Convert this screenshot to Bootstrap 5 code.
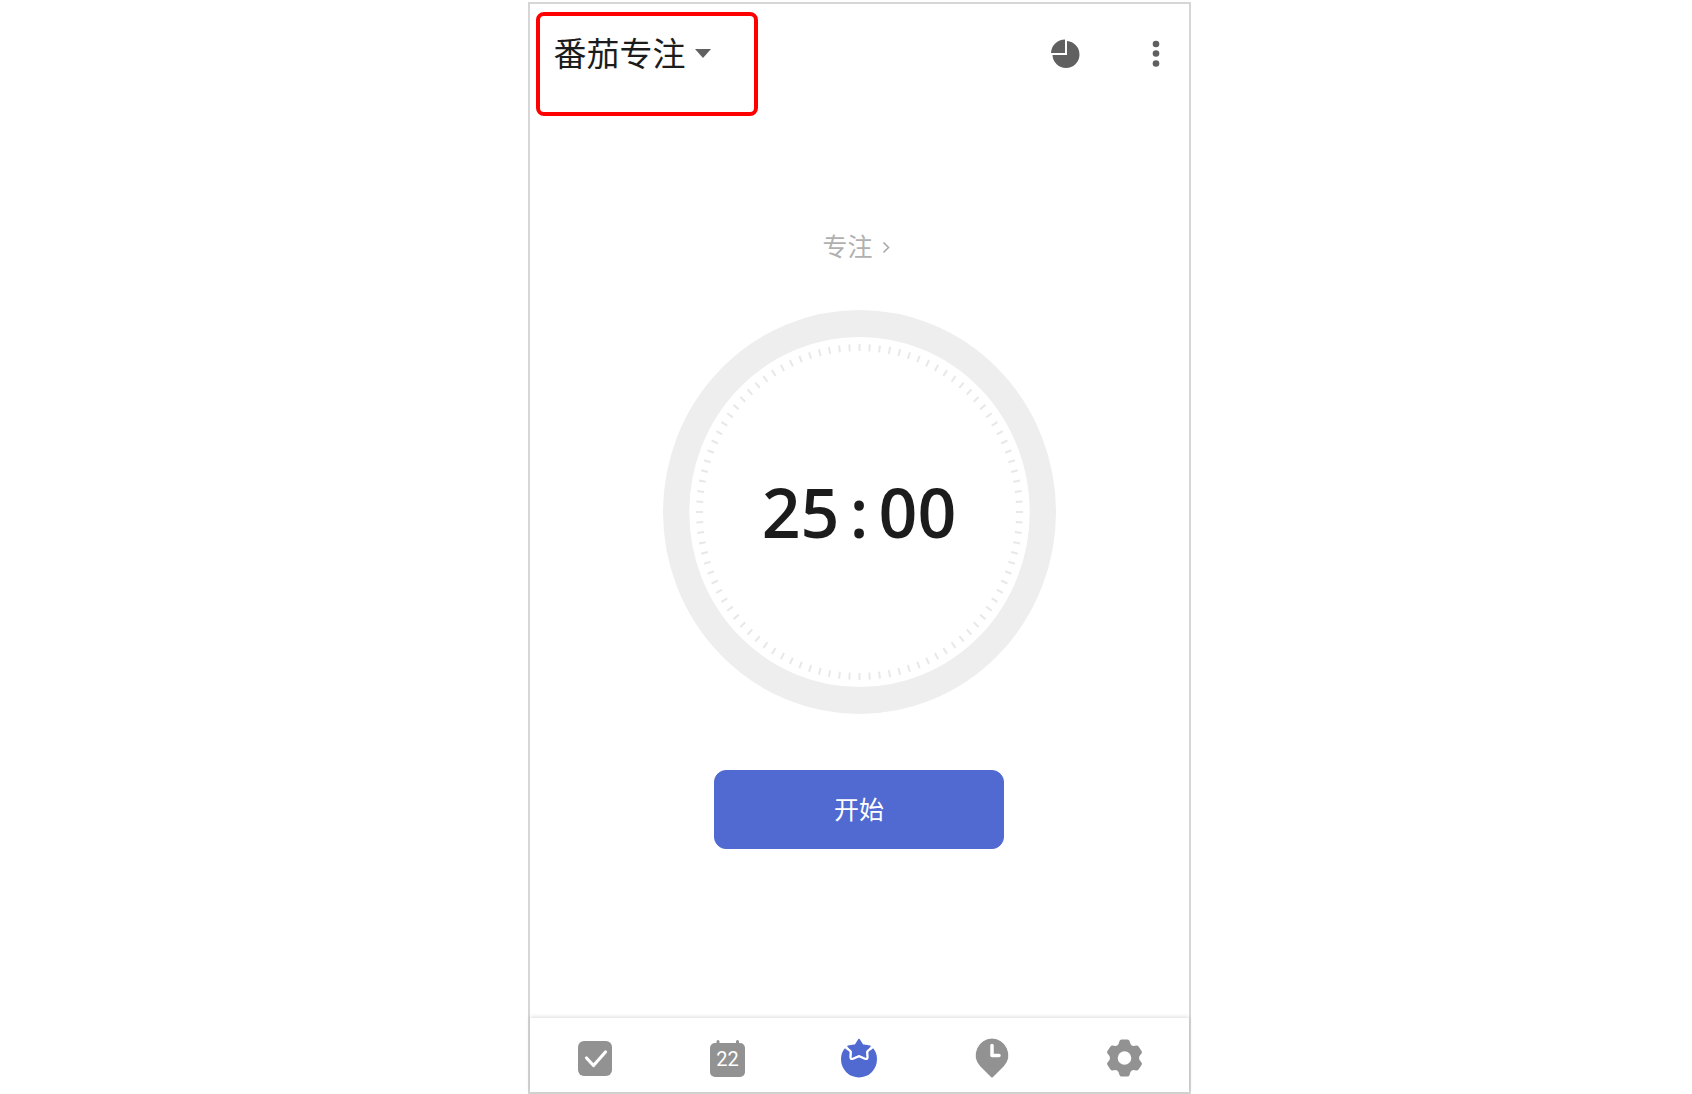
<!DOCTYPE html>
<html lang="zh-CN">
<head>
<meta charset="utf-8">
<meta name="viewport" content="width=device-width, initial-scale=1">
<title>番茄专注</title>
<link href="https://cdn.jsdelivr.net/npm/bootstrap@5.3.0/dist/css/bootstrap.min.css" rel="stylesheet">
<style>
  body { font-family: Roboto, "Noto Sans CJK SC", sans-serif; background: #fff; }
  .stage { min-height: 100vh; padding: 2px 0 0 26px; }
  .phone { width: 100%; max-width: 663px; border: 2px solid #d6d6d6; }
  .topbar { padding: 8px 9px 0 6px; }
  .highlight { width: 222px; height: 104px; padding: 19px 14px; border: 4px solid #f00; border-radius: 8px; }
  .title-btn { font-size: 33px; line-height: 40px; color: #1c1c1c; gap: 9px; }
  .actions { padding-top: 18px; gap: 42px; }
  .icon-btn { width: 48px; height: 48px; }
  .mode-btn { margin-top: 117px; padding: 0 6px 0 0; font-size: 25px; line-height: 30px; color: #b0b0b0; gap: 9px; }
  .dial { margin-top: 47px; }
  .dial svg { width: 393px; height: 404px; }
  .clock { font: 600 68px/80px "Open Sans", "Noto Sans", sans-serif; color: #1c1c1c; }
  .clock-colon { width: 39px; }
  .start-btn { width: 290px; height: 79px; margin-top: 56px; padding: 8px 0 6px; border-radius: 12px; font-size: 25px;
    --bs-btn-color: #fff; --bs-btn-bg: #506ad2; --bs-btn-border-color: #506ad2;
    --bs-btn-hover-color: #fff; --bs-btn-hover-bg: #455ec4; --bs-btn-hover-border-color: #455ec4; }
  .tabs { padding: 20px 0 14px; box-shadow: 0 -1px 4px rgba(0,0,0,.14); color: #929292; }
  .tabs svg { width: 40px; height: 40px; }
  .tabs .active-tab { color: #506ad2; }
</style>
</head>
<body>
<div class="stage d-flex justify-content-center">
  <div class="phone d-flex flex-column">
    <header class="topbar d-flex justify-content-between align-items-start">
      <div class="highlight">
        <button type="button" class="title-btn btn border-0 p-0 d-flex align-items-center">
          番茄专注
          <svg width="16" height="12" viewBox="0 0 16 12" aria-hidden="true"><path d="M0 0h16L8 9z" fill="#606060"/></svg>
        </button>
      </div>
      <div class="actions d-flex">
        <button type="button" class="icon-btn btn border-0 p-0 d-flex align-items-center justify-content-center" aria-label="统计">
          <svg width="30" height="30" viewBox="0 0 30 30" fill="#606060" aria-hidden="true">
            <path d="M14 .5V14H0A14 13.800 0 0 1 14 .5z"/>
            <path d="M16 2A13.500 13.500 0 1 1 1.500 16H16z"/>
          </svg>
        </button>
        <button type="button" class="icon-btn btn border-0 p-0 d-flex align-items-center justify-content-center" aria-label="更多">
          <svg width="8" height="28" viewBox="0 0 8 28" fill="#606060" aria-hidden="true">
            <circle cx="4" cy="4" r="3.3"/><circle cx="4" cy="13.500" r="3.3"/><circle cx="4" cy="23.500" r="3.3"/>
          </svg>
        </button>
      </div>
    </header>

    <main class="d-flex flex-column align-items-center">
      <button type="button" class="mode-btn btn border-0 d-flex align-items-center">
        专注
        <svg width="8" height="12" viewBox="0 0 8 12" fill="none" stroke="#aaa" stroke-width="1.6" aria-hidden="true"><path d="M1.500 .5l5 5-5 5"/></svg>
      </button>
      <div class="dial position-relative d-flex">
        <svg viewBox="0 0 404 404" preserveAspectRatio="none" fill="none" aria-hidden="true">
          <circle cx="202" cy="202" r="188.5" stroke="#eee" stroke-width="27"/>
          <circle cx="202" cy="202" r="164.5" stroke="#e8e8e8" stroke-width="7" pathLength="1000" stroke-dasharray="2 8" stroke-dashoffset="1"/>
        </svg>
        <div class="clock position-absolute top-50 start-50 translate-middle d-flex" role="timer">
          <span>25</span><span class="clock-colon text-center">:</span><span>00</span>
        </div>
      </div>
      <button type="button" class="start-btn btn">开始</button>
    </main>

    <nav class="tabs d-flex mt-auto" aria-label="主导航">
      <a href="#tasks" class="flex-fill d-flex justify-content-center text-reset" aria-label="任务">
        <svg viewBox="-1 0 40 40" aria-hidden="true">
          <rect x="2" y="3" width="34" height="35" rx="6" fill="currentColor"/>
          <path d="M10.500 20l7 7.500 12-13.500" fill="none" stroke="#fff" stroke-width="3.2" stroke-linecap="round" stroke-linejoin="round"/>
        </svg>
      </a>
      <a href="#calendar" class="flex-fill d-flex justify-content-center text-reset" aria-label="日历">
        <svg viewBox="-1 0 40 40" aria-hidden="true">
          <rect x="2" y="5" width="35" height="34" rx="5" fill="currentColor"/>
          <path d="M10 3.500v4M29.500 3.500v4" stroke="currentColor" stroke-width="3" stroke-linecap="round"/>
          <text x="19.500" y="28" text-anchor="middle" font-family="Roboto, sans-serif" font-size="20" fill="#fff">22</text>
        </svg>
      </a>
      <a href="#focus" class="active-tab flex-fill d-flex justify-content-center" aria-label="专注" aria-current="page">
        <svg viewBox="0 0 40 40" aria-hidden="true">
          <path d="M6.500 9.500C3.500 12.500 2 16.500 2 21.200a18 18.300 0 0 0 36 0C38 16.500 36.500 12.500 33.500 9.500L28 13.500V20l-8-1-8 1v-6.500z" fill="currentColor"/>
          <path d="M20 1.500l3.500 5.500 7.500 1.300-4.500 5 .5 6-7-3-7 3 .5-6-4.500-5L16.500 7z" fill="currentColor" stroke="currentColor" stroke-width="1.500" stroke-linejoin="round"/>
          <path d="M6 8.500q1.500 2.500 3.500 3.200 2.300.8 2.200 3l-.3 4.300q0 2.600 2.600 1.800l6-2.500 6 2.500q2.600.8 2.600-1.800l-.3-4.300q-.1-2.200 2.200-3 2-.7 3.500-3.200" fill="none" stroke="#fff" stroke-width="2.200" stroke-linejoin="round"/>
        </svg>
      </a>
      <a href="#moments" class="flex-fill d-flex justify-content-center text-reset" aria-label="时刻">
        <svg viewBox="0 0 40 40" aria-hidden="true">
          <path d="M21 .5A16.200 16.500 0 0 0 9 28l11 11q1 1 2 0l11-11A16.200 16.500 0 0 0 21 .5z" fill="currentColor"/>
          <path d="M21 7.500v10h7" fill="none" stroke="#fff" stroke-width="3.500" stroke-linecap="round" stroke-linejoin="round"/>
        </svg>
      </a>
      <a href="#settings" class="flex-fill d-flex justify-content-center text-reset" aria-label="设置">
        <svg viewBox="-1 -1 40 40" aria-hidden="true">
          <path fill-rule="evenodd" fill="currentColor" d="M17.500 .5h6q1.500 0 2 1.500l1 3q1 2 3 2l3-.5q1.500 0 2.200 1.200l3 4.500q.6 1.300-.2 2.300l-2 2.500q-1 2 0 4l2 2.500q.8 1 .2 2.300l-3 4.500q-.7 1.200-2.200 1.200l-3-.5q-2 0-3 2l-1 3q-.5 1.500-2 1.500h-6q-1.500 0-2-1.500l-1-3q-1-2-3-2l-3 .5q-1.500 0-2.200-1.200l-3-4.500q-.6-1.300.2-2.300l2-2.500q1-2 0-4l-2-2.500q-.8-1-.2-2.300l3-4.500q.7-1.200 2.200-1.200l3 .5q2 0 3-2l1-3q.5-1.500 2-1.500zM20.500 12.200a6.800 6.800 0 1 0 0 13.600 6.800 6.800 0 0 0 0-13.600z"/>
        </svg>
      </a>
    </nav>
  </div>
</div>
<script src="https://cdn.jsdelivr.net/npm/bootstrap@5.3.0/dist/js/bootstrap.bundle.min.js"></script>
</body>
</html>
